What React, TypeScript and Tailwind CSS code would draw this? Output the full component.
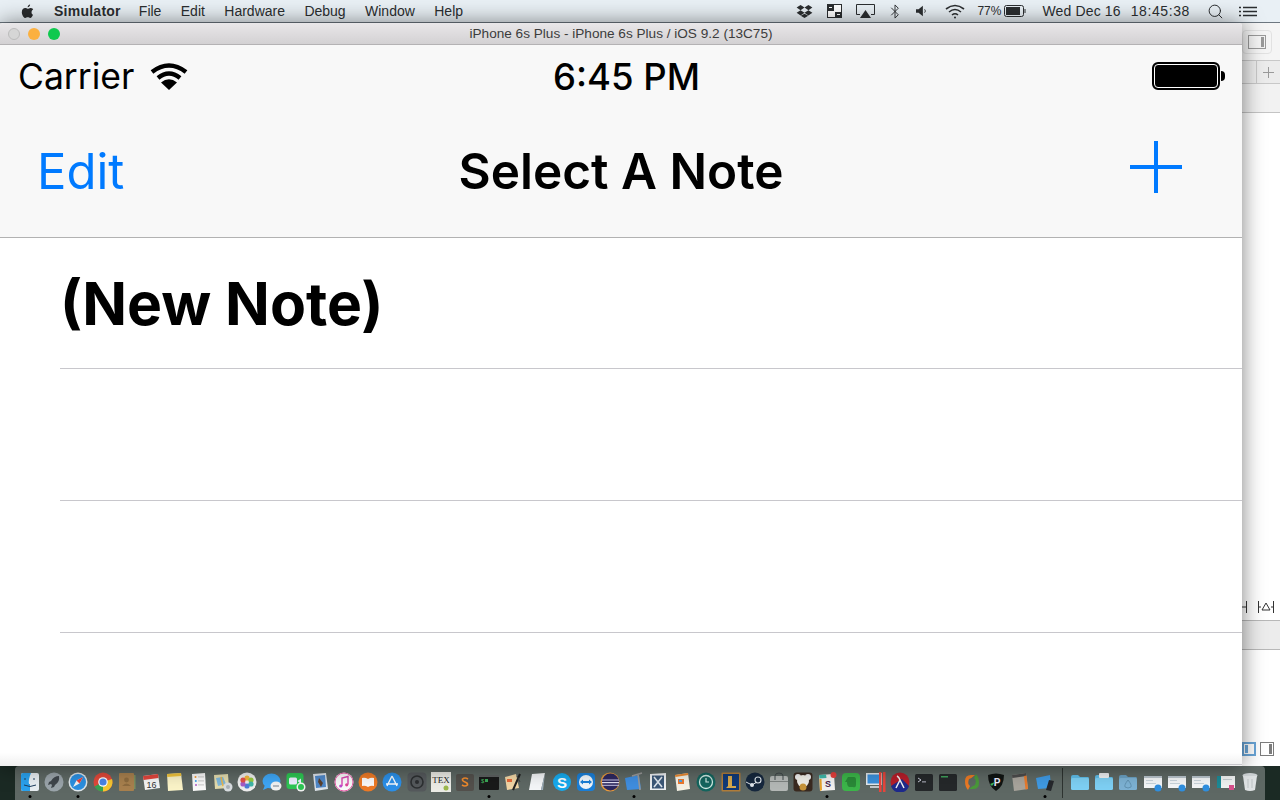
import { Search } from 'lucide-react';
import type { ReactNode } from 'react';

const menus = ['File', 'Edit', 'Hardware', 'Debug', 'Window', 'Help'];

function Rect(props: { x: number; y: number; w: number; h: number; r?: number; fill: string }) {
  return <rect x={props.x} y={props.y} width={props.w} height={props.h} rx={props.r ?? 0} fill={props.fill} />;
}

const folder = (fill: string, top: string) => (
  <>
    <path d="M1 5 Q1 3 3 3 H8 L10 5 H18 Q19 5 19 7 V9 H1 Z" fill={top} />
    <Rect x={1} y={6} w={18} h={12} r={1.5} fill={fill} />
  </>
);

const docThumb = (badge: string) => (
  <>
    <Rect x={1} y={4} w={18} h={12} fill="#f4f6f8" />
    <Rect x={1} y={4} w={18} h={2} fill="#b9c4cc" />
    <Rect x={3} y={8} w={7} h={1} fill="#c9d4dc" />
    <Rect x={3} y={11} w={10} h={1} fill="#c9d4dc" />
    <circle cx="15" cy="16" r="3.5" fill={badge} />
  </>
);

const dockIcons: ReactNode[] = [
  <>
    <Rect x={1} y={1} w={18} h={18} r={2} fill="#e8eef2" />
    <path d="M1 3 Q1 1 3 1 H11 Q8 8 9 12 H10 V19 H3 Q1 19 1 17 Z" fill="#2aa2ee" />
    <path d="M5 6 V8 M14 6 V8 M4 13 Q10 16 16 13" stroke="#1c3c5c" strokeWidth="1" fill="none" />
  </>,
  <>
    <circle cx="10" cy="10" r="9.5" fill="#9aa4aa" />
    <path d="M15 4 Q10 4 7 9 L5 10 L4 13 L7 12 L8 13 L7 16 L10 15 L11 13 Q16 10 15 4 Z" fill="#3f464c" />
  </>,
  <>
    <circle cx="10" cy="10" r="9.5" fill="#dfe6ea" />
    <circle cx="10" cy="10" r="8" fill="#2b8fe0" />
    <path d="M15 5 L8.5 8.5 L5 15 L11.5 11.5 Z" fill="#f2f2f2" />
    <path d="M15 5 L8.5 8.5 L11.5 11.5 Z" fill="#e8433a" />
  </>,
  <>
    <circle cx="10" cy="10" r="9.5" fill="#e0483a" />
    <path d="M10 10 L1.5 14.5 A9.5 9.5 0 0 0 10 19.5 Z" fill="#37a353" />
    <path d="M10 10 L10 19.5 A9.5 9.5 0 0 0 19 7 Z" fill="#f6c631" />
    <circle cx="10" cy="10" r="4.8" fill="#fff" />
    <circle cx="10" cy="10" r="3.6" fill="#4a84e8" />
  </>,
  <>
    <Rect x={2} y={1} w={15} h={18} r={1} fill="#a8804e" />
    <Rect x={17} y={3} w={1.5} h={14} fill="#7c8f5e" />
    <circle cx="9.5" cy="8" r="2.4" fill="#8d6b3f" />
    <path d="M5 14 Q9.5 9 14 14 Z" fill="#8d6b3f" />
  </>,
  <>
    <path d="M2 4 L17 2 L19 16 L4 18 Z" fill="#f4f4f4" />
    <path d="M2 4 L17 2 L17.5 6 L2.5 8 Z" fill="#e0453c" />
    <text x="10.5" y="15.5" fontSize="9" textAnchor="middle" fill="#333" fontFamily="Liberation Sans, sans-serif">16</text>
  </>,
  <>
    <path d="M2 2 L16 1 L18 18 L3 19 Z" fill="#fbf4c8" />
    <path d="M2 2 L16 1 L16.3 4 L2.2 5 Z" fill="#f2c53c" />
  </>,
  <>
    <path d="M3 2 L16 1 L17 18 L4 19 Z" fill="#fafafa" />
    <circle cx="6.5" cy="5" r="1" fill="#f39a2f" />
    <circle cx="6.8" cy="9" r="1" fill="#3aa0e8" />
    <circle cx="7" cy="13" r="1" fill="#b05cc8" />
    <Rect x={9} y={4.5} w={6} h={0.8} fill="#bbb" />
    <Rect x={9} y={8.5} w={6} h={0.8} fill="#bbb" />
    <Rect x={9} y={12.5} w={6} h={0.8} fill="#bbb" />
  </>,
  <>
    <path d="M1 3 L15 2 L16 16 L2 17 Z" fill="#e4dcae" />
    <path d="M3 6 L10 5 L13 12 L5 14 Z" fill="#7fb8dc" />
    <path d="M8 5 L10 14" stroke="#e9b44c" strokeWidth="1.5" />
    <circle cx="15" cy="15" r="4.5" fill="#d8dde0" />
    <circle cx="15" cy="15" r="2" fill="#aab2b8" />
  </>,
  <>
    <circle cx="10" cy="10" r="9.5" fill="#eeeeee" />
    <circle cx="10" cy="6" r="2.6" fill="#f4b63a" />
    <circle cx="14" cy="8" r="2.6" fill="#96c93d" />
    <circle cx="14" cy="12" r="2.6" fill="#3fb6a8" />
    <circle cx="10" cy="14" r="2.6" fill="#4a7fd8" />
    <circle cx="6" cy="12" r="2.6" fill="#a45cc8" />
    <circle cx="6" cy="8" r="2.6" fill="#e2504a" />
  </>,
  <>
    <ellipse cx="9.5" cy="9" rx="9" ry="7.5" fill="#3ea6f5" />
    <path d="M3 13 L1 18 L8 15 Z" fill="#3ea6f5" />
    <ellipse cx="14" cy="14" rx="5.5" ry="4.5" fill="#f2f2f2" />
    <circle cx="12" cy="14" r="0.7" fill="#456" />
    <circle cx="14" cy="14" r="0.7" fill="#456" />
    <circle cx="16" cy="14" r="0.7" fill="#456" />
  </>,
  <>
    <Rect x={0.5} y={1} w={17} h={16} r={3} fill="#2dc653" />
    <Rect x={3} y={5.5} w={8} h={7} r={1.5} fill="#eef" />
    <path d="M11.5 9 L15 6.5 V12 Z" fill="#eef" />
    <circle cx="15" cy="15" r="4.5" fill="#f2f2f2" />
    <circle cx="15" cy="15" r="3" fill="#2dc653" />
  </>,
  <>
    <path d="M3 2 L16 1 L18 17 L5 19 Z" fill="#dde3ea" />
    <path d="M5 4 L15 3 L16 15 L6 16 Z" fill="#4f88c8" />
    <path d="M9 6 L13 11 L11 15 L8 10 Z" fill="#5a3f2c" />
  </>,
  <>
    <circle cx="10" cy="10" r="9.5" fill="#fafafa" />
    <circle cx="10" cy="10" r="9" fill="none" stroke="#e85aa8" strokeWidth="1" />
    <path d="M8 14 V6 L14 4.5 V12.5" stroke="#d948b0" strokeWidth="1.4" fill="none" />
    <circle cx="6.7" cy="14" r="1.6" fill="#c04ad0" />
    <circle cx="12.7" cy="12.8" r="1.6" fill="#e0489c" />
  </>,
  <>
    <circle cx="10" cy="10" r="9.5" fill="#ed7a26" />
    <path d="M4 6 Q7 5 10 7 V15 Q7 13 4 14 Z M16 6 Q13 5 10 7 V15 Q13 13 16 14 Z" fill="#fafafa" />
  </>,
  <>
    <circle cx="10" cy="10" r="9.5" fill="#2b8fe8" />
    <path d="M10 4 L5 14 M10 4 L15 14 M4 12 H16" stroke="#f4f8fb" strokeWidth="1.4" fill="none" />
  </>,
  <>
    <Rect x={0.5} y={0.5} w={19} h={19} r={4} fill="#55595c" />
    <circle cx="10" cy="10" r="6" fill="none" stroke="#2c2f31" strokeWidth="1.6" />
    <circle cx="10" cy="10" r="2" fill="#2c2f31" />
  </>,
  <>
    <Rect x={0} y={0} w={20} h={20} fill="#ecece6" />
    <text x="10" y="11" fontSize="9" textAnchor="middle" fill="#222" fontFamily="Liberation Serif, serif">TEX</text>
    <circle cx="15" cy="16" r="2.5" fill="#9cb84c" />
  </>,
  <>
    <Rect x={1} y={2} w={18} h={17} r={2} fill="#53504c" />
    <path d="M13 7 Q10 5 7.5 7 Q7 9 10 10 Q13 11 12.5 13 Q10 15 7 13" stroke="#ef8a2c" strokeWidth="1.6" fill="none" />
  </>,
  <>
    <Rect x={0} y={3} w={20} h={15} r={1} fill="#191a1a" />
    <Rect x={0} y={3} w={20} h={2} fill="#5c6060" />
    <text x="2" y="10.5" fontSize="5.5" fill="#4fd06a" fontFamily="Liberation Mono, monospace">$</text>
    <Rect x={6} y={7} w={3} h={3} fill="#3aa858" />
  </>,
  <>
    <path d="M2 5 L13 2 L16 16 L4 18 Z" fill="#f2d6a6" />
    <Rect x={4} y={7} w={5} h={3} fill="#e86a3a" />
    <path d="M17 2 L10 18" stroke="#222" strokeWidth="2" />
    <path d="M14 4 L17 10" stroke="#444" strokeWidth="1" />
  </>,
  <>
    <path d="M5 2 L18 1 L14 18 L2 18 Z" fill="#f4f6f8" />
    <path d="M18 1 L14 18 L16 18 Z" fill="#9fb0bc" />
  </>,
  <>
    <circle cx="10" cy="10" r="9" fill="#17aaee" />
    <text x="10" y="15.5" fontSize="15" fontWeight="700" textAnchor="middle" fill="#fff" fontFamily="Liberation Sans, sans-serif">S</text>
  </>,
  <>
    <Rect x={1} y={1} w={18} h={18} r={4} fill="#1a7fd8" />
    <circle cx="10" cy="10" r="7" fill="#f0f6fb" />
    <path d="M4 10 L7 7.5 V9 H13 V7.5 L16 10 L13 12.5 V11 H7 V12.5 Z" fill="#1a7fd8" />
  </>,
  <>
    <circle cx="10" cy="10" r="9.5" fill="#e89a3c" />
    <circle cx="10.5" cy="10" r="8.5" fill="#2d2860" />
    <Rect x={2} y={7.5} w={17} h={1} fill="#c8c4e4" />
    <Rect x={2} y={10} w={17} h={1.2} fill="#e4e2f4" />
    <Rect x={2} y={12.8} w={17} h={1} fill="#c8c4e4" />
  </>,
  <>
    <path d="M1 6 L15 3 L17 17 L3 18 Z" fill="#3f8ee0" />
    <path d="M8 4 L18 1 M14 2 L16 18" stroke="#9a9a9a" strokeWidth="1.6" />
  </>,
  <>
    <path d="M2 2 L18 1 L18 18 L2 18 Z" fill="#eef0f2" />
    <Rect x={4} y={3.5} w={12} h={13} fill="#3c5878" />
    <path d="M6 5 L14 15 M14 5 L6 15" stroke="#dfe6ee" strokeWidth="1.6" />
  </>,
  <>
    <path d="M3 3 L16 1 L18 17 L5 19 Z" fill="#f6f2e6" />
    <path d="M3 3 L16 1 L16.3 3 L3.3 5 Z" fill="#ec8a30" />
    <Rect x={6} y={7} w={6} h={5} fill="#ec7a30" />
    <Rect x={7} y={8} w={3} h={2} fill="#4fa0e0" />
  </>,
  <>
    <circle cx="10" cy="10" r="9.5" fill="#14655e" />
    <circle cx="10" cy="10" r="6.5" fill="none" stroke="#cfe8e2" strokeWidth="1.3" />
    <path d="M10 6 V10 H13" stroke="#cfe8e2" strokeWidth="1.2" fill="none" />
  </>,
  <>
    <Rect x={0.5} y={0.5} w={19} h={19} r={1} fill="#b07d3a" />
    <Rect x={2} y={2} w={16} h={16} fill="#123a78" />
    <path d="M7 4 H11 V14 H15 V16 H5 L7 14 Z" fill="#d8a94c" />
  </>,
  <>
    <circle cx="10" cy="10" r="9.5" fill="#16283e" />
    <circle cx="13" cy="8" r="3" fill="none" stroke="#dfe6ec" strokeWidth="1.1" />
    <circle cx="7" cy="13" r="2" fill="#dfe6ec" />
    <path d="M1 10 L7 13 L12 10" stroke="#dfe6ec" strokeWidth="1" fill="none" />
  </>,
  <>
    <Rect x={1} y={4} w={18} h={15} r={2} fill="#b4b8b6" />
    <Rect x={1} y={9} w={18} h={1} fill="#7e8482" />
    <path d="M6 8 V4 Q6 1 10 1 Q14 1 14 4 V8" stroke="#41484a" strokeWidth="1" fill="none" />
  </>,
  <>
    <Rect x={0.5} y={0.5} w={19} h={19} r={3} fill="#3a2a20" />
    <circle cx="5" cy="5" r="3" fill="#eee" />
    <circle cx="15" cy="5" r="3" fill="#eee" />
    <circle cx="10" cy="9" r="6" fill="#f0efe8" />
    <circle cx="10" cy="15" r="3.5" fill="#c8953a" />
  </>,
  <>
    <path d="M2 3 L17 2 L18 18 L3 19 Z" fill="#f4f2f0" />
    <path d="M2 3 L9 2.5 L9.5 6 L2.5 6.5 Z" fill="#3fb8a8" />
    <path d="M2.5 7 L4.5 7 L5 18 L3 19 Z" fill="#e9a42c" />
    <text x="11" y="15" fontSize="9" fontWeight="700" textAnchor="middle" fill="#4a2348" fontFamily="Liberation Sans, sans-serif">S</text>
    <circle cx="16.5" cy="3" r="3" fill="#e8403c" />
  </>,
  <>
    <Rect x={1} y={1} w={18} h={18} r={4} fill="#3cb64a" />
    <path d="M7 5 H13 Q15 5 15 8 V13 Q15 16 12 15 H8 Q6 14 6 10 H4 Z" fill="#2a8a38" />
  </>,
  <>
    <Rect x={0} y={1} w={16} h={12} fill="#e4e8ec" />
    <Rect x={1.5} y={2.5} w={13} h={9} fill="#3b90dc" />
    <Rect x={4} y={14} w={9} h={2} fill="#c4c8cc" />
    <Rect x={13} y={0} w={2.5} h={20} fill="#e8453c" />
    <Rect x={17} y={0} w={2.5} h={20} fill="#e8453c" />
  </>,
  <>
    <circle cx="10" cy="10" r="9.5" fill="#b51e2a" />
    <path d="M1 14 A9.5 9.5 0 0 0 19 14 L12 7 Z" fill="#1e2a8c" />
    <path d="M6 16 L10 8 Q9 5 7 4 M10 8 L14 16" stroke="#f2f2f2" strokeWidth="1.5" fill="none" />
  </>,
  <>
    <Rect x={1} y={2} w={18} h={17} r={1.5} fill="#25282a" />
    <path d="M4 6 L7 8 L4 10" stroke="#dde" strokeWidth="0.9" fill="none" />
    <Rect x={8} y={9.5} w={4} h={0.8} fill="#dde" />
  </>,
  <>
    <Rect x={1} y={2} w={18} h={17} r={1.5} fill="#25282a" />
    <Rect x={3} y={4} w={7} h={1.5} fill="#3fa05a" />
  </>,
  <>
    <path d="M3 9 Q3 3 9 3 H13 Q10 6 7 7 Q5 12 8 14 L6 18 Q3 15 3 9 Z" fill="#ec7a24" />
    <path d="M17 11 Q17 17 11 17 H7 Q10 14 13 13 Q15 8 12 6 L14 2 Q17 5 17 11 Z" fill="#4a9a3a" />
  </>,
  <>
    <path d="M2 3 Q10 0 18 3 Q18 14 10 19 Q2 14 2 3 Z" fill="#101412" />
    <text x="11" y="14" fontSize="10" fontWeight="700" textAnchor="middle" fill="#eef" fontFamily="Liberation Sans, sans-serif">P</text>
    <path d="M4 12 L9 10 L6 14 Z" fill="#3fb85a" />
  </>,
  <>
    <path d="M2 3 L16 1 L18 17 L4 19 Z" fill="#a8a49c" />
    <path d="M2 3 L16 1 L16.3 4 L2.3 6 Z" fill="#4c4c4c" />
    <path d="M14 4 L16.5 3.5 L18 17 L15.5 17.5 Z" fill="#e87a2c" />
  </>,
  <>
    <path d="M1 6 L15 3 L16 16 L3 17 Z" fill="#3f9ae4" />
    <path d="M14 8 L19 9 L16 19 L11 18 Z" fill="#26282c" />
  </>,
];

const stacks: ReactNode[] = [
  folder('#7ed0f4', '#5fbde8'),
  <>
    {folder('#7ed0f4', '#5fbde8')}
    <Rect x={5} y={1} w={10} h={5} r={1} fill="#eef1f3" />
  </>,
  <>
    {folder('#7db2d4', '#6aa0c2')}
    <path d="M10 8 Q6 13 7 15 Q10 17 13 15 Q14 13 10 8 Z" fill="none" stroke="#5a8aa8" strokeWidth="0.8" />
  </>,
  docThumb('#2f8fe0'),
  docThumb('#2f8fe0'),
  docThumb('#2f8fe0'),
  <>
    <Rect x={1} y={4} w={18} h={12} fill="#f0f2f2" />
    <Rect x={1} y={4} w={4} h={12} fill="#1c8a96" />
    <Rect x={7} y={7} w={9} h={1} fill="#c4ccd0" />
    <Rect x={13} y={13} w={5} h={5} fill="#d8508c" />
  </>,
  <>
    <ellipse cx="10" cy="3.5" rx="7.5" ry="2.5" fill="#cfd4d6" />
    <path d="M3 4 L5 18 Q10 20 15 18 L17 4 Z" fill="#dfe3e4" />
    <path d="M8 7 V16 M12 7 V16" stroke="#b0b6b8" strokeWidth="0.7" />
  </>,
];

function DockItem({ children, running, wide }: { children: ReactNode; running?: boolean; wide?: boolean }) {
  return (
    <div className={`relative flex h-full shrink-0 items-start justify-center pt-[6px] ${wide ? 'w-[24.3px]' : 'w-[24.17px]'}`}>
      <svg viewBox="0 0 20 20" className="h-[20px] w-[20px]">
        {children}
      </svg>
      {running && <span className="absolute bottom-[2px] left-1/2 h-[3px] w-[3px] -translate-x-1/2 rounded-full bg-black" />}
    </div>
  );
}

// indexes of the apps with a dot under them
const running = [0, 2, 19, 25, 33, 42];

function MenuBar() {
  return (
    <div className="flex h-[23px] shrink-0 items-center justify-between border-b border-[#6d7780] bg-[#e9f0f5] text-[14px] text-[#2b2e30] [font-family:'Liberation_Sans',sans-serif]">
      <div className="flex items-center">
        <svg viewBox="0 0 16 18" className="ml-[21px] h-[15px] w-[13px]" fill="#2a2c2e">
          <path d="M11.2 0.5c0.1 1.6-1.3 3.4-3 3.3C8 2.2 9.6 0.6 11.2 0.5zM14.8 13c-0.6 1.3-1.9 4-3.5 4-1.2 0-1.6-0.8-3-0.8s-1.9 0.8-3 0.8C3.6 17 1 13.2 1 9.8 1 6.6 3.1 4.8 5.1 4.8c1.3 0 2.3 0.9 3.1 0.9 0.8 0 2-1 3.4-1 0.6 0 2.4 0.1 3.4 1.7-2.9 1.8-2.4 5.6 0 6.6z" />
        </svg>
        <span className="ml-[20px] font-bold tracking-[0.25px]">Simulator</span>
        <div className="ml-[18px] flex gap-[19.4px]">
          {menus.map((m) => (
            <span key={m}>{m}</span>
          ))}
        </div>
      </div>
      <div className="flex items-center">
        <svg viewBox="0 0 18 16" className="h-[14px] w-[17px]" fill="#2b2e30">
          <path d="M4.5 1L9 4 4.5 7 0 4zM13.5 1L18 4l-4.5 3L9 4zM4.5 7L9 10l-4.5 3L0 10zM13.5 7L18 10l-4.5 3L9 10zM4.7 13.5L9 11l4.3 2.5L9 16z" />
        </svg>
        <svg viewBox="0 0 15 14" className="ml-[14px] h-[14px] w-[15px]">
          <rect x="0.5" y="0.5" width="14" height="13" fill="#fff" stroke="#2b2e30" />
          <rect x="0" y="0" width="7" height="7" fill="#2b2e30" />
          <rect x="8" y="8" width="7" height="6" fill="#2b2e30" />
          <path d="M2 3.5H5M10 10.5H13" stroke="#fff" strokeWidth="1" />
        </svg>
        <svg viewBox="0 0 19 14" className="ml-[14px] h-[14px] w-[19px]" fill="none">
          <path d="M4 10.5H0.5V0.5H18.5V10.5H15" stroke="#2b2e30" />
          <path d="M9.5 6L15 14H4z" fill="#2b2e30" />
        </svg>
        <svg viewBox="0 0 10 16" className="ml-[15px] h-[15px] w-[10px]" fill="none" stroke="#2b2e30">
          <path d="M1 4L8.5 11.5 5 15V1L8.5 4.5 1 12" />
        </svg>
        <svg viewBox="0 0 14 12" className="ml-[16px] h-[12px] w-[12px]">
          <path d="M0 4H3L8 0V12L3 8H0Z" fill="#2b2e30" />
          <path d="M10 4Q12 6 10 8" stroke="#2b2e30" fill="none" />
        </svg>
        <svg viewBox="0 0 20 15" className="ml-[17px] h-[15px] w-[20px]" fill="none" stroke="#2b2e30" strokeWidth="1.6">
          <path d="M1 5Q10-2 19 5M4 8Q10 3 16 8M7 11Q10 8.5 13 11" />
          <circle cx="10" cy="13.5" r="1" fill="#2b2e30" stroke="none" />
        </svg>
        <span className="ml-[12px] text-[12px]">77%</span>
        <svg viewBox="0 0 23 12" className="ml-[3px] h-[12px] w-[23px]">
          <rect x="0.5" y="0.5" width="19" height="11" rx="2" fill="none" stroke="#2b2e30" />
          <rect x="2" y="2" width="14" height="8" fill="#2b2e30" />
          <path d="M21 4V8" stroke="#2b2e30" />
        </svg>
        <span className="ml-[15px] tracking-[0.15px]">Wed Dec 16</span>
        <span className="ml-[10px] tracking-[0.6px]">18:45:38</span>
        <Search className="ml-[17px] h-[17px] w-[17px]" strokeWidth={1.4} />
        <svg viewBox="0 0 18 11" className="ml-[15px] mr-[23px] h-[11px] w-[18px]" stroke="#2b2e30" strokeWidth="1.6">
          <path d="M0 1.5H2M4 1.5H18M0 5.5H2M4 5.5H18M0 9.5H2M4 9.5H18" />
        </svg>
      </div>
    </div>
  );
}

function SimulatorWindow() {
  return (
    <div className="relative z-10 flex w-[1242px] shrink-0 flex-col overflow-hidden rounded-t-[4px] bg-white shadow-[0_0_22px_rgba(0,0,0,0.5)]">
      <div className="relative flex h-[22px] shrink-0 items-center justify-center border-b border-[#b4b2b4] bg-gradient-to-b from-[#e9e7e9] to-[#d3d1d3]">
        <div className="absolute left-[8px] top-[5px] flex gap-[8px]">
          <span className="h-[12px] w-[12px] rounded-full border border-[#bcbcbc] bg-[#d6d6d6]" />
          <span className="h-[12px] w-[12px] rounded-full bg-[#fbb040]" />
          <span className="h-[12px] w-[12px] rounded-full bg-[#0fc94e]" />
        </div>
        <span className="pt-px text-[13.6px] text-[#3c3c3c] [font-family:'Liberation_Sans',sans-serif]">iPhone 6s Plus - iPhone 6s Plus / iOS 9.2 (13C75)</span>
      </div>

      <div className="flex h-[193px] shrink-0 flex-col border-b border-[#b2b2b2] bg-[#f8f8f8] text-black [font-family:Inter,sans-serif]">
        <div className="grid h-[61px] shrink-0 grid-cols-[1fr_auto_1fr] items-center pl-[19px] pr-[17px]">
          <div className="flex items-center">
            <span className="mt-[2px] -ml-px text-[35.5px] leading-none">Carrier</span>
            <svg viewBox="0 0 38 28" className="ml-[16px] h-[28px] w-[38px]" fill="none" stroke="#000" strokeWidth="4.4">
              <path d="M2 10Q19-3 36 10M8 16Q19 7 30 16" />
              <path d="M19 28L11 20.5Q19 14 27 20.5Z" fill="#000" stroke="none" />
            </svg>
          </div>
          <span className="mt-[3px] pl-[9px] text-[36.5px] font-medium leading-none">6:45 PM</span>
          <div className="flex items-center justify-end">
            <div className="h-[28px] w-[68px] rounded-[6px] border-2 border-black bg-black outline outline-1 -outline-offset-[3px] outline-white" />
            <div className="ml-[1px] h-[10px] w-[4px] rounded-r-full bg-black" />
          </div>
        </div>
        <div className="grid flex-1 grid-cols-[1fr_auto_1fr] items-center px-[38px]">
          <span className="-ml-px text-[49px] leading-none text-[#007aff]">Edit</span>
          <span className="text-[49.5px] font-semibold leading-none">Select A Note</span>
          <svg viewBox="0 0 52 52" className="mb-[10px] mr-[22px] h-[52px] w-[52px] justify-self-end" stroke="#007aff" strokeWidth="4">
            <path d="M26 0V52M0 26H52" />
          </svg>
        </div>
      </div>

      <div className="h-[131px] shrink-0 pl-[60px]">
        <div className="flex h-full items-center border-b border-[#c8c7cc] pt-[2px]">
          <span className="text-[58.8px] font-bold leading-none text-black [font-family:Inter,sans-serif]">(New Note)</span>
        </div>
      </div>
      <div className="h-[132px] shrink-0 pl-[60px]">
        <div className="h-full border-b border-[#c8c7cc]" />
      </div>
      <div className="h-[132px] shrink-0 pl-[60px]">
        <div className="h-full border-b border-[#c8c7cc]" />
      </div>
      <div className="h-[133px] shrink-0 bg-gradient-to-b from-white from-90% to-[#f0f0f0]">
        <div className="ml-[60px] h-[132px] border-b border-[#c8c7cc]" />
      </div>
    </div>
  );
}

function RightPanel() {
  return (
    <div className="flex min-w-0 flex-1 flex-col bg-white">
      <div className="flex h-[37px] shrink-0 items-end justify-end bg-[#f5f5f5] pb-[6px] pr-[8px]">
        <div className="flex h-[24px] w-[30px] items-center justify-center rounded-[4px] border border-[#e2e2e2]">
          <div className="flex h-[14px] w-[18px] justify-end border border-[#9a9a9a] p-px">
            <div className="h-full w-[3px] bg-[#9a9a9a]" />
          </div>
        </div>
      </div>
      <div className="flex h-[24px] shrink-0 items-center justify-end border-y border-[#c8c8c8] bg-[#ececec]">
        <div className="flex h-full w-[24px] items-center justify-center border-l border-[#c8c8c8]">
          <svg viewBox="0 0 11 11" className="h-[11px] w-[11px]" stroke="#9a9a9a">
            <path d="M5.5 0V11M0 5.5H11" />
          </svg>
        </div>
      </div>
      <div className="h-[29px] shrink-0 border-b border-[#c4c4c4] bg-[#f2f2f2]" />
      <div className="flex-1 bg-white" />
      <div className="flex h-[27px] shrink-0 items-start pt-[8px]">
        <svg viewBox="0 0 5 12" className="h-[12px] w-[5px]" fill="none" stroke="#333">
          <path d="M0 6H4M4.5 0V12" />
        </svg>
        <svg viewBox="0 0 16 12" className="ml-[11px] h-[12px] w-[16px]" fill="none" stroke="#333">
          <path d="M0.5 0V12M15.5 0V12M0.5 6H3M13 6H15.5M8 2L12 9H4Z" />
        </svg>
      </div>
      <div className="h-[30px] shrink-0 border-y border-[#b8b8b8] bg-[#ececec]" />
      <div className="h-[92px] shrink-0 bg-white" />
      <div className="flex h-[14px] shrink-0 gap-[4px]">
        <div className="flex h-[14px] w-[14px] border-2 border-[#6aa6d8] p-px">
          <div className="h-full w-[3px] bg-[#6aa6d8]" />
        </div>
        <div className="flex h-[14px] w-[14px] justify-end border border-[#7c7c7c] p-px">
          <div className="h-full w-[3px] bg-[#7c7c7c]" />
        </div>
      </div>
      <div className="h-[10px] shrink-0 bg-white" />
    </div>
  );
}

function Dock() {
  return (
    <div className="flex h-[34px] shrink-0 bg-[#1b2a24] pl-[15px] pr-[15px]">
      <div className="flex flex-1 items-stretch rounded-t-[4px] bg-[#5e6864] pl-[3px]">
        {dockIcons.map((icon, i) => (
          <DockItem key={i} running={running.includes(i)}>
            {icon}
          </DockItem>
        ))}
        <div className="mx-[5px] my-[2px] w-px shrink-0 bg-[#2e3431]" />
        {stacks.map((icon, i) => (
          <DockItem key={i} wide>
            {icon}
          </DockItem>
        ))}
      </div>
    </div>
  );
}

export default function App() {
  return (
    <div className="flex h-[800px] w-[1280px] flex-col overflow-hidden bg-white">
      <MenuBar />
      <div className="flex min-h-0 flex-1">
        <SimulatorWindow />
        <RightPanel />
      </div>
      <Dock />
    </div>
  );
}
